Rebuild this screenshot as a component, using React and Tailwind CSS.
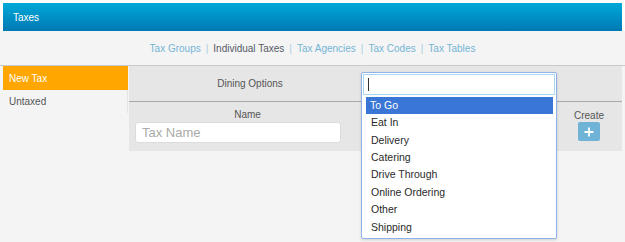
import React from 'react';

const FONT = { fontFamily: '"Liberation Sans", Arial, sans-serif' };

const NAV = ['Tax Groups', 'Individual Taxes', 'Tax Agencies', 'Tax Codes', 'Tax Tables'];
const OPTIONS = ['To Go', 'Eat In', 'Delivery', 'Catering', 'Drive Through', 'Online Ordering', 'Other', 'Shipping'];

function DiningDropdown() {
  return (
    <div className="absolute left-[361px] top-[72px] w-[196px] h-[167px] bg-white border border-[#8fb2ea] rounded-[2px] shadow-[0_1px_3px_rgba(0,0,0,0.15)] p-[1px]">
      <div className="h-[21px] border border-[#a9d7f2] flex items-center pl-[4px]">
        <span className="w-px h-[13px] bg-[#333]" />
      </div>
      <ul className="mt-[2px] pl-[3px] pr-[2px]">
        {OPTIONS.map((opt, i) => (
          <li
            key={opt}
            className={
              i === 0
                ? 'h-[17.4px] flex items-center pl-[4px] text-[10.5px] bg-[#3a76d6] text-white'
                : 'h-[17.4px] flex items-center pl-[5px] text-[10.5px] text-[#2a2a2a]'
            }
          >
            {opt}
          </li>
        ))}
      </ul>
    </div>
  );
}

export default function App() {
  return (
    <div className="relative w-[625px] h-[242px] bg-[#f4f4f4] overflow-hidden" style={FONT}>
      {/* header */}
      <div className="pt-[3px] px-[3px] bg-white">
        <div className="h-[28px] flex items-center pl-[10px] bg-gradient-to-b from-[#00a9d9] to-[#0078b3] text-white text-[10px]">
          Taxes
        </div>
      </div>

      {/* sub nav */}
      <div className="h-[35px] flex items-center justify-center border-b border-[#c9c9c9] text-[10px]">
        {NAV.map((item, i) => (
          <React.Fragment key={item}>
            {i > 0 && <span className="mx-[5px] text-[#a8cde0]">|</span>}
            <span className={item === 'Individual Taxes' ? 'text-[#555a66]' : 'text-[#74b4d6]'}>{item}</span>
          </React.Fragment>
        ))}
      </div>

      {/* body */}
      <div className="flex pl-[3px]">
        <div className="w-[125px]">
          <div className="h-[24px] flex items-center pl-[6px] bg-[#ffa600] text-white text-[10px]">New Tax</div>
          <div className="h-[23px] flex items-center pl-[6px] text-[10px] text-[#555] border-r border-[#e4e4e4]">Untaxed</div>
        </div>

        <div className="ml-px w-[493px] h-[85px] bg-[#e6e6e6]">
          <div className="h-[36px] flex border-b border-[#a6aab0]">
            <div className="w-[242px] flex items-center justify-center text-[10px] text-[#555]">Dining Options</div>
          </div>
          <div className="flex">
            <div className="ml-[5px] w-[227px] pt-[5px]">
              <div className="h-[15px] text-center text-[10px] text-[#555] leading-[15px]">Name</div>
              <div className="ml-px w-[206px] h-[21px] bg-white rounded-[3px] border border-[#dcdcdc] flex items-center pl-[6px] text-[13px] text-[#aaa]">
                Tax Name
              </div>
            </div>
            <div className="ml-[208px] w-[40px] pt-[7px] flex flex-col items-center">
              <div className="h-[13px] text-[10px] text-[#555] leading-[13px]">Create</div>
              <div className="w-[22px] h-[19px] bg-[#6fb4d6] rounded-[2px] flex items-center justify-center">
                <svg width="10" height="10" viewBox="0 0 10 10">
                  <path d="M5 0.5v9M0.5 5h9" stroke="white" strokeWidth="1.8" />
                </svg>
              </div>
            </div>
          </div>
        </div>
      </div>

      <DiningDropdown />
    </div>
  );
}
